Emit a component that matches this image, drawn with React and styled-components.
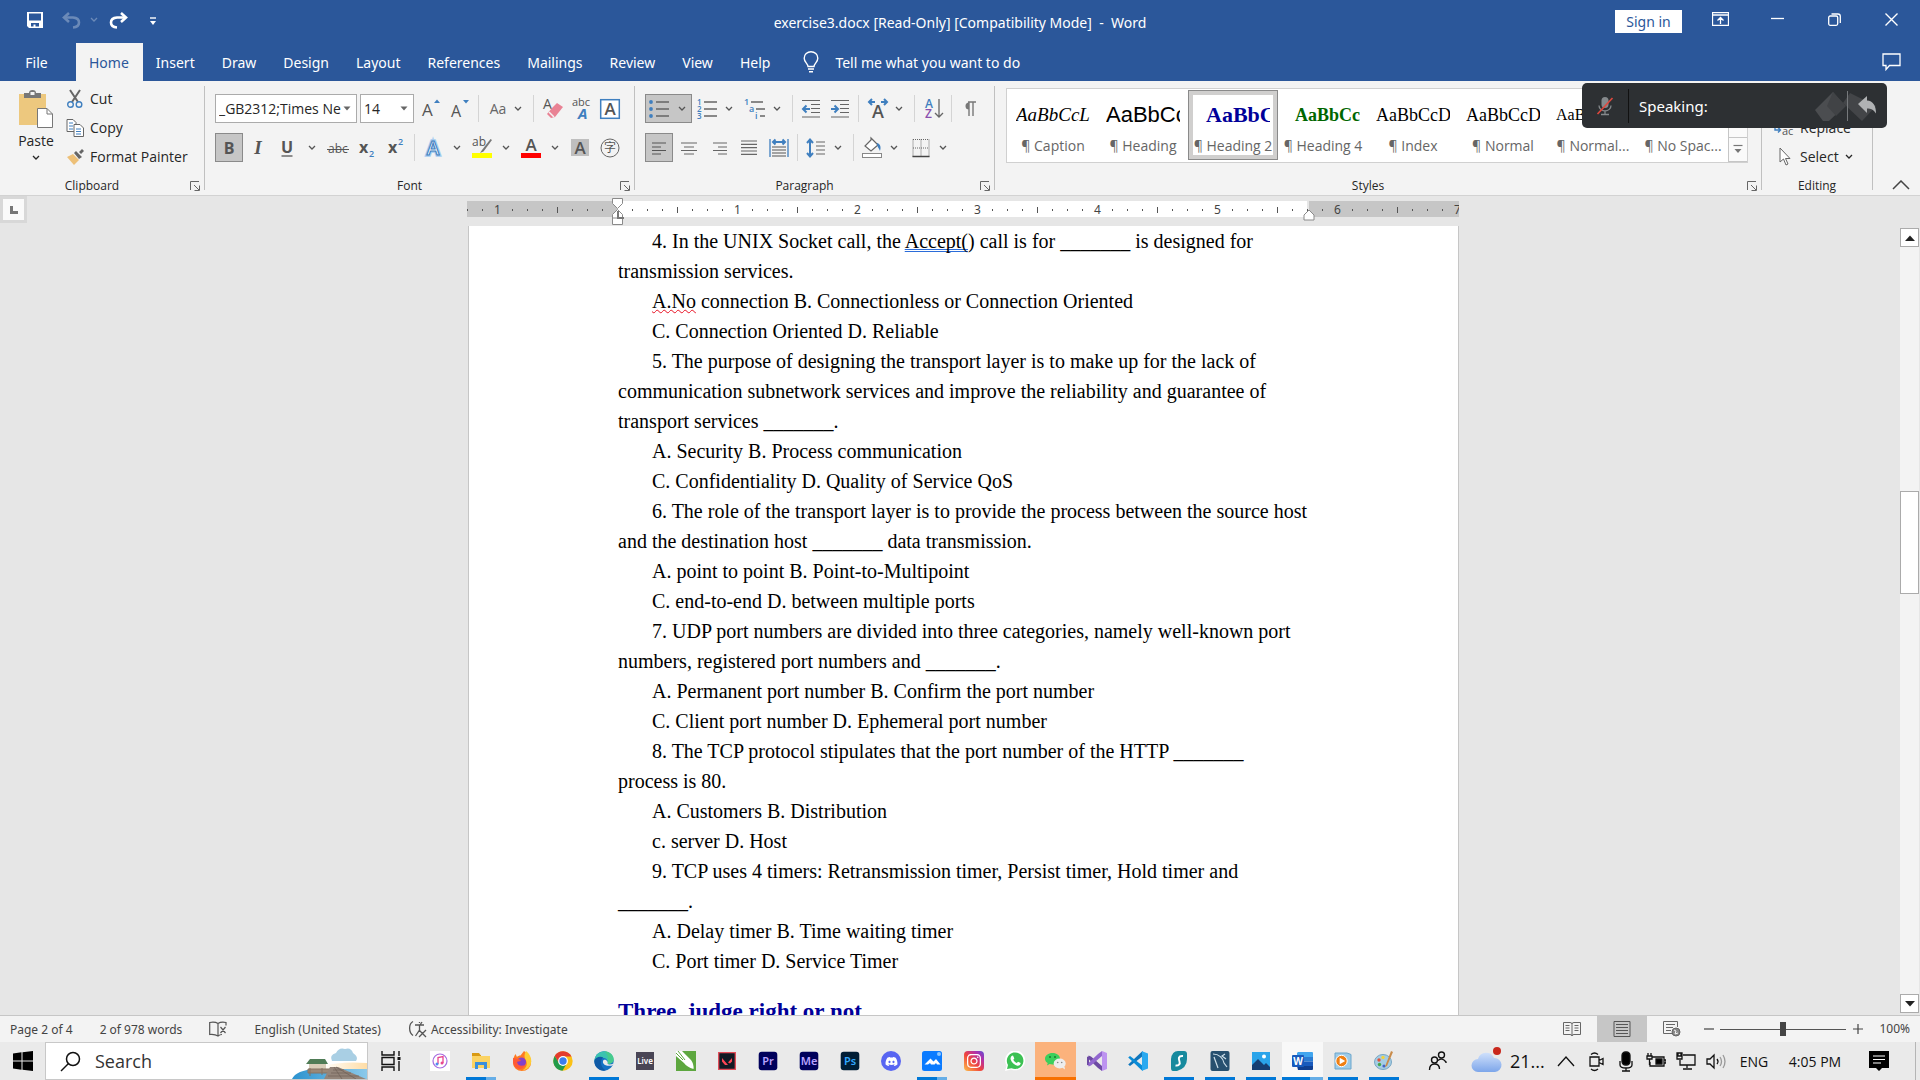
import React, { useState } from 'react';
import styled, { createGlobalStyle } from 'styled-components';
import { FaDiscord, FaInstagram } from 'react-icons/fa';

const Grammar = styled.span`
    text-decoration: underline double #2b6cd9 1px;
    text-decoration-skip-ink: none;
    text-underline-offset: 1px;
`;

const Spelling = styled.span`
    text-decoration: underline wavy #e81123 1px;
    text-decoration-skip-ink: none;
`;

const tabs = ['Home', 'Insert', 'Draw', 'Design', 'Layout', 'References', 'Mailings', 'Review', 'View', 'Help'];

const gallery = [
    { name: 'Caption', sample: 'AaBbCcL', size: 19, italic: true },
    { name: 'Heading', sample: 'AaBbCc', size: 22, sans: true },
    { name: 'Heading 2', sample: 'AaBbC', size: 22, bold: true, color: '#000099', indent: 10 },
    { name: 'Heading 4', sample: 'AaBbCc', size: 18, bold: true, color: '#006600', indent: 9 },
    { name: 'Index', sample: 'AaBbCcD', size: 18 },
    { name: 'Normal', sample: 'AaBbCcD', size: 18 },
    { name: 'Normal...', sample: 'AaBbCcD', size: 16 },
    { name: 'No Spac...', sample: 'AaBbCcD', size: 16 },
];

const blank = '_______';

const paragraphs = [
    <>4. In the UNIX Socket call, the <Grammar>Accept(</Grammar>) call is for {blank} is designed for transmission services.</>,
    <><Spelling>A.No</Spelling> connection B. Connectionless or Connection Oriented</>,
    'C. Connection Oriented D. Reliable',
    '5. The purpose of designing the transport layer is to make up for the lack of communication subnetwork services and improve the reliability and guarantee of transport services ' + blank + '.',
    'A. Security B. Process communication',
    'C. Confidentiality D. Quality of Service QoS',
    '6. The role of the transport layer is to provide the process between the source host and the destination host ' + blank + ' data transmission.',
    'A. point to point B. Point-to-Multipoint',
    'C. end-to-end D. between multiple ports',
    '7. UDP port numbers are divided into three categories, namely well-known port numbers, registered port numbers and ' + blank + '.',
    'A. Permanent port number B. Confirm the port number',
    'C. Client port number D. Ephemeral port number',
    '8. The TCP protocol stipulates that the port number of the HTTP ' + blank + ' process is 80.',
    'A. Customers B. Distribution',
    'c. server D. Host',
    '9. TCP uses 4 timers: Retransmission timer, Persist timer, Hold timer and ' + blank + '.',
    'A. Delay timer B. Time waiting timer',
    'C. Port timer D. Service Timer',
];

// one mark every eighth of an inch, zero is the left margin
const rulerMarks = Array.from({ length: 67 }, (_, i) => i - 10);

export default function App() {
    const [tab, setTab] = useState('Home');
    const [style, setStyle] = useState('Heading 2');
    const [zoom, setZoom] = useState(100);

    return (
        <Window>
            <GlobalStyle />
            <TitleBar>
                <QuickAccess>
                    <QuickButton aria-label="Save" $w={36}><SaveIcon /></QuickButton>
                    <QuickButton aria-label="Undo" $w={36} $off><UndoIcon /></QuickButton>
                    <QuickButton aria-label="Undo list" $w={10} $off><Chevron /></QuickButton>
                    <QuickButton aria-label="Redo" $w={38}><UndoIcon flip /></QuickButton>
                    <QuickButton aria-label="Customize" $w={32}>
                        <svg width="8" height="10" viewBox="0 0 8 10"><path d="M1 3h6" stroke="#fff" strokeWidth="1.4" /><path d="M1 6h6L4 10z" fill="#fff" /></svg>
                    </QuickButton>
                </QuickAccess>
                <Title>exercise3.docx [Read-Only] [Compatibility Mode]&nbsp; -&nbsp; Word</Title>
                <WindowButtons>
                    <SignIn>Sign in</SignIn>
                    <WindowButton aria-label="Ribbon display options">
                        <svg width="17" height="14" viewBox="0 0 17 14" fill="none" stroke="#fff"><path d="M.5.5h16v13H.5zM.5 3h16M8.5 12V6M5.5 8.5l3-3 3 3" strokeWidth="1.3" /></svg>
                    </WindowButton>
                    <WindowButton aria-label="Minimize">
                        <svg width="13" height="13" viewBox="0 0 13 13"><path d="M0 5.500h13" stroke="#fff" strokeWidth="1.3" /></svg>
                    </WindowButton>
                    <WindowButton aria-label="Restore">
                        <svg width="13" height="13" viewBox="0 0 13 13" fill="none" stroke="#fff" strokeWidth="1.3"><rect x=".7" y="3" width="9" height="9.3" rx="1.5" /><path d="M3.5 1H10a2.300 2.300 0 0 1 2.300 2.300V10" /></svg>
                    </WindowButton>
                    <WindowButton aria-label="Close">
                        <svg width="13" height="13" viewBox="0 0 13 13"><path d="M.5.5l12 12M12.5.5l-12 12" stroke="#fff" strokeWidth="1.4" /></svg>
                    </WindowButton>
                </WindowButtons>
            </TitleBar>

            <TabBar>
                <FileTab>File</FileTab>
                {tabs.map((name) => (
                    <Tab key={name} $active={name === tab} onClick={() => setTab(name)}>{name}</Tab>
                ))}
                <TellMe>
                    <svg width="16" height="22" viewBox="0 0 16 22" fill="none" stroke="#fff" strokeWidth="1.4"><path d="M5 15.500c0-3-3.800-4-3.800-8.300a6.800 6.500 0 0 1 13.600 0c0 4.300-3.800 5.300-3.800 8.300zM5 18h6M6 20.800h4" /></svg>
                    Tell me what you want to do
                </TellMe>
                <CommentButton aria-label="Comments">
                    <svg width="19" height="18" viewBox="0 0 19 18" fill="none" stroke="#fff" strokeWidth="1.3"><path d="M1 1h17v11.500H7.500L4 16.500v-4H1z" /></svg>
                </CommentButton>
            </TabBar>

            <Ribbon>
                <Group $w={204}>
                    <ClipboardBody>
                        <PasteButton>
                            <PasteIcon />
                            Paste
                            <PasteMore><Chevron /></PasteMore>
                        </PasteButton>
                        <Stack>
                            <TextButton><CutIcon />Cut</TextButton>
                            <TextButton><CopyIcon />Copy</TextButton>
                            <TextButton><PainterIcon />Format Painter</TextButton>
                        </Stack>
                    </ClipboardBody>
                    <GroupLabel name="Clipboard" launcher />
                </Group>
                <Divider />

                <Group $w={429}>
                    <ToolRows>
                        <ToolRow>
                            <Field $w={142}><FieldInput aria-label="Font" defaultValue="_GB2312;Times Ne" /><Arrow /></Field>
                            <Field $w={54}>
                                <FieldSelect aria-label="Font size" defaultValue="14"><option>12</option><option>14</option><option>16</option></FieldSelect>
                                <Arrow />
                            </Field>
                            <Tool aria-label="Grow font"><Glyph><text x="3" y="19" fontSize="17">A</text><path d="M15 6l3-3.500L21 6z" fill="#3f7fbf" /></Glyph></Tool>
                            <Tool aria-label="Shrink font"><Glyph><text x="3" y="20" fontSize="16">A</text><path d="M15 3l3 3.500L21 3z" fill="#3f7fbf" /></Glyph></Tool>
                            <Separator $w={7} />
                            <Tool $w={46} aria-label="Change case"><CaseText>Aa</CaseText><Chevron /></Tool>
                            <Separator $w={7} />
                            <Tool aria-label="Clear formatting"><Glyph><text x="3" y="12" fontSize="14">A</text><path d="M12 11l5-5 6 4-8 10-4 1-4-4z" fill="#e98294" /><path d="M9 15l5 5" stroke="#f3f3f3" strokeWidth="1.5" /></Glyph></Tool>
                            <Tool aria-label="Phonetic guide"><Glyph><text x="3" y="9" fontSize="11">abc</text><text x="9" y="22" fontSize="15" fontStyle="italic" fontWeight="700" fill="#3f7fbf">A</text></Glyph></Tool>
                            <Tool aria-label="Character border"><Glyph><rect x="2.7" y="2.7" width="18.600" height="18.600" fill="#fff" stroke="#3f7fbf" strokeWidth="1.5" /><text x="12" y="18" textAnchor="middle" fontSize="17" fontWeight="600">A</text></Glyph></Tool>
                        </ToolRow>
                        <ToolRow>
                            <Tool $on aria-label="Bold"><Glyph><text x="12" y="18" textAnchor="middle" fontSize="16" fontWeight="700">B</text></Glyph></Tool>
                            <Tool aria-label="Italic"><Glyph><text x="12" y="18" textAnchor="middle" fontSize="19" fontStyle="italic" fontWeight="700" fontFamily="Liberation Serif">I</text></Glyph></Tool>
                            <Tool aria-label="Underline"><Glyph><text x="12" y="17" textAnchor="middle" fontSize="16" fontWeight="700">U</text><path d="M6.500 20h11" stroke="#555" strokeWidth="1.3" /></Glyph></Tool>
                            <Drop $w={22} aria-label="Underline styles"><Chevron /></Drop>
                            <Tool aria-label="Strikethrough"><Glyph><text x="12" y="17" textAnchor="middle" fontSize="12">abc</text><path d="M1 13.500h22" stroke="#555" /></Glyph></Tool>
                            <Tool aria-label="Subscript"><Glyph><text x="4" y="17" fontSize="16" fontWeight="700">x</text><text x="14" y="21" fontSize="9" fontWeight="600" fill="#3f7fbf">2</text></Glyph></Tool>
                            <Tool aria-label="Superscript"><Glyph><text x="4" y="17" fontSize="16" fontWeight="700">x</text><text x="14" y="9" fontSize="9" fontWeight="600" fill="#3f7fbf">2</text></Glyph></Tool>
                            <Separator $w={7} />
                            <Tool aria-label="Text effects"><Glyph><text x="12" y="19" textAnchor="middle" fontSize="19" fontWeight="600" fill="#fff" stroke="#a8cdf0" strokeWidth="3.5">A</text><text x="12" y="19" textAnchor="middle" fontSize="19" fontWeight="600" fill="#fff" stroke="#3f7fbf" strokeWidth="1.1">A</text></Glyph></Tool>
                            <Drop $w={20} aria-label="Effect list"><Chevron /></Drop>
                            <Tool aria-label="Highlight"><Glyph><text x="2" y="10" fontSize="12">ab</text><path d="M20.500 3l-8.500 11-2 3 3.500-1.500L22 4z" fill="#777" /><rect x="2" y="17" width="20" height="5" fill="#ff0" /></Glyph></Tool>
                            <Drop $w={20} aria-label="Highlight colours"><Chevron /></Drop>
                            <Tool aria-label="Font colour"><Glyph><text x="12" y="15" textAnchor="middle" fontSize="17" fontWeight="600">A</text><rect x="2" y="17" width="20" height="5" fill="#f00" /></Glyph></Tool>
                            <Drop $w={20} aria-label="Font colours"><Chevron /></Drop>
                            <Tool aria-label="Character shading"><Glyph><rect x="3" y="3" width="18" height="17" fill="#bfbfbf" /><text x="12" y="18" textAnchor="middle" fontSize="17" fontWeight="600">A</text></Glyph></Tool>
                            <Tool aria-label="Enclose characters"><Glyph><circle cx="13" cy="12" r="9" fill="none" stroke="#666" /><text x="13" y="16" textAnchor="middle" fontSize="12" fontFamily="Noto Sans CJK SC">字</text></Glyph></Tool>
                        </ToolRow>
                    </ToolRows>
                    <GroupLabel name="Font" launcher />
                </Group>
                <Divider />

                <Group $w={359}>
                    <ToolRows>
                        <ToolRow>
                            <Tool $w={47} $on aria-label="Bullets"><Glyph><path d="M8 5h13M8 12h13M8 19h13" stroke="#666" strokeWidth="1.3" /><circle cx="3" cy="5" r="1.9" fill="#3f7fbf" /><circle cx="3" cy="12" r="1.9" fill="#3f7fbf" /><circle cx="3" cy="19" r="1.9" fill="#3f7fbf" /></Glyph><Chevron /></Tool>
                            <Tool $w={47} aria-label="Numbering"><Glyph><path d="M9 5h13M9 12h13M9 19h13" stroke="#666" strokeWidth="1.3" /><g fontSize="8" fontWeight="600" fill="#3f7fbf"><text x="2" y="8">1</text><text x="2" y="15">2</text><text x="2" y="22">3</text></g></Glyph><Chevron /></Tool>
                            <Tool $w={47} aria-label="Multilevel list"><Glyph><path d="M8 5h12M13 12h9M17 19h5" stroke="#666" strokeWidth="1.3" /><g fontSize="9" fontWeight="600" fill="#3f7fbf"><text x="1" y="8">1</text><text x="6" y="15">a</text><text x="12" y="22">i</text></g></Glyph><Chevron /></Tool>
                            <Separator $w={7} />
                            <Tool aria-label="Decrease indent"><IndentIcon d="M11 12H4m3.500-3.500L4 12l3.500 3.500" /></Tool>
                            <Tool aria-label="Increase indent"><IndentIcon d="M3 12h7M6.500 8.500L10 12l-3.500 3.500" /></Tool>
                            <Separator $w={7} />
                            <Tool $w={47} aria-label="Asian layout"><Glyph><text x="13" y="21" textAnchor="middle" fontSize="18" fontWeight="600">A</text><path d="M10 5H4m3-3L4 5l3 3M16 5h6m-3-3l3 3-3 3" fill="none" stroke="#3f7fbf" strokeWidth="2" /></Glyph><Chevron /></Tool>
                            <Separator $w={7} />
                            <Tool aria-label="Sort"><Glyph><text x="4" y="11" fontSize="12" fontWeight="600" fill="#3f7fbf">A</text><text x="4" y="21" fontSize="12" fontWeight="600" fill="#8a4fae">Z</text><path d="M18 2v18m-4-4l4 4 4-4" fill="none" stroke="#666" strokeWidth="1.3" /></Glyph></Tool>
                            <Separator $w={7} />
                            <Tool aria-label="Show marks"><Glyph><path d="M11 5.500a3.500 3.500 0 0 0 0 7z" fill="#777" /><path d="M11 19V5.500M15 19V5.500M10 5h8" fill="none" stroke="#777" strokeWidth="1.4" /></Glyph></Tool>
                        </ToolRow>
                        <ToolRow $gap={2}>
                            <Tool $on aria-label="Align left"><Glyph><path d="M5 7h14M5 11h9M5 14.500h14M5 18h9" stroke="#555" strokeWidth="1.2" /></Glyph></Tool>
                            <Tool aria-label="Center"><Glyph><path d="M4 7h16M7 11h10M4 14.500h16M7 18h10" stroke="#666" strokeWidth="1.2" /></Glyph></Tool>
                            <Tool aria-label="Align right"><Glyph><path d="M6 7h14M11 11h9M6 14.500h14M11 18h9" stroke="#666" strokeWidth="1.2" /></Glyph></Tool>
                            <Tool aria-label="Justify"><Glyph><path d="M4 5h16M4 8.300h16M4 11.600h16M4 15h16M4 18.300h16" stroke="#666" strokeWidth="1.2" /></Glyph></Tool>
                            <Tool aria-label="Distribute"><Glyph><path d="M3 3v18M21 3v18" stroke="#3f7fbf" strokeWidth="1.3" /><path d="M6 6h12M8.500 3.500L6 6l2.500 2.500M15.500 3.500L18 6l-2.500 2.500" fill="none" stroke="#3f7fbf" strokeWidth="2" /><path d="M5 11h14M5 14h14M5 17h14M5 20h14" stroke="#555" strokeWidth="1.2" /></Glyph></Tool>
                            <Separator $w={5} />
                            <Tool $w={47} aria-label="Line spacing"><Glyph><path d="M6 4v16M3 7l3-3.500L9 7M3 17l3 3.500L9 17" fill="none" stroke="#3f7fbf" strokeWidth="2" /><path d="M12 6h9M12 10h9M12 14h9M12 18h9" stroke="#666" strokeWidth="1.2" /></Glyph><Chevron /></Tool>
                            <Separator $w={5} />
                            <Tool $w={47} aria-label="Shading"><Glyph><path d="M11 2l7 7-7 6-6-5 6-6z" fill="#fff" stroke="#666" strokeWidth="1.2" /><path d="M17 7c4 1 4 5 3 8-1-3-3-4-3-8z" fill="#3f7fbf" /><rect x="2.5" y="17.5" width="19" height="4" fill="#fff" stroke="#888" /></Glyph><Chevron /></Tool>
                            <Tool $w={47} aria-label="Borders"><Glyph><path d="M4 3.500h16M4 12h16M4 3.500v17M12 3.500v17M20 3.500v17" stroke="#666" strokeDasharray="1 1" /><path d="M3.500 20.500h17" stroke="#444" strokeWidth="1.5" /></Glyph><Chevron /></Tool>
                        </ToolRow>
                    </ToolRows>
                    <GroupLabel name="Paragraph" launcher />
                </Group>
                <Divider />

                <Group>
                    <Gallery>
                        {gallery.map((s) => (
                            <StyleCard key={s.name} $active={s.name === style} onClick={() => setStyle(s.name)}>
                                <Sample $size={s.size} $bold={s.bold} $italic={s.italic} $sans={s.sans} $color={s.color} $indent={s.indent}>{s.sample}</Sample>
                                <StyleName>¶ {s.name}</StyleName>
                            </StyleCard>
                        ))}
                        <GalleryScroll>
                            <GalleryButton aria-label="Previous styles" />
                            <GalleryButton aria-label="Next styles"><Arrow /></GalleryButton>
                            <GalleryButton aria-label="More styles">
                                <svg width="10" height="10" viewBox="0 0 10 10"><path d="M.5 1.500h9" stroke="#777" strokeWidth="1.2" /><path d="M1.500 5h7L5 9z" fill="#777" /></svg>
                            </GalleryButton>
                        </GalleryScroll>
                    </Gallery>
                    <GroupLabel name="Styles" launcher />
                </Group>
                <Divider />

                <Group $w={110}>
                    <EditingBody>
                        <TextButton>
                            <svg width="20" height="20" viewBox="0 0 20 20"><path d="M1 7v5h5M4 9.500L6.500 12 4 14.500" fill="none" stroke="#3f7fbf" strokeWidth="1.4" /><text x="8" y="17" fontSize="11" fill="#555">ac</text></svg>
                            Replace
                        </TextButton>
                        <TextButton>
                            <svg width="20" height="20" viewBox="0 0 20 20"><path d="M6 1v14l3.500-3 2.500 6 2-1-2.500-5.500H16z" fill="#fff" stroke="#666" /></svg>
                            Select <Chevron />
                        </TextButton>
                    </EditingBody>
                    <GroupLabel name="Editing" />
                </Group>
                <Divider />
                <CollapseButton aria-label="Collapse the ribbon">
                    <svg width="18" height="10" viewBox="0 0 18 10"><path d="M1 9l8-8 8 8" fill="none" stroke="#444" strokeWidth="1.5" /></svg>
                </CollapseButton>

                <Speaking>
                    <svg width="18" height="20" viewBox="0 0 18 20"><rect x="5.5" y="1" width="7" height="11" rx="3.5" fill="#85898c" /><path d="M3 9.500a6 5.500 0 0 0 12 0M9 15v3M5 18.500h8" fill="none" stroke="#85898c" strokeWidth="1.3" /><path d="M16.500 2L1.500 18" stroke="#e0483e" strokeWidth="1.7" /></svg>
                    <SpeakingLabel>Speaking:</SpeakingLabel>
                    <svg width="64" height="34" viewBox="0 0 64 34"><path d="M1 21L19 3l12 14-16 15H9z" fill="#4b4d50" /><path d="M19 3l13 14-10 10-9-10z" fill="#414346" /><path d="M36 4l26 13-14 15L29 14z" fill="#434548" /><path d="M33.500 2v30" stroke="#76797c" /><path d="M44 15l9-8v4.500c6 .5 9 5 9 13-2.500-4-5-5-9-5V24z" fill="#b0b2b4" /></svg>
                </Speaking>
            </Ribbon>

            <RulerRow>
                <TabStop aria-label="Tab stop"><span /></TabStop>
                <Ruler>
                    <RulerScale>
                        {rulerMarks.map((n) => (
                            <Mark key={n} $kind={markKind(n)}>{markKind(n) === 'inch' ? Math.abs(n / 8) : ''}</Mark>
                        ))}
                    </RulerScale>
                    <LeftIndent width="14" height="29" viewBox="0 0 14 29"><path d="M1.500 1.500h10v5l-5 5-5-5zM6.500 12.500l5 5v10h-10v-10zM1.500 21h10" fill="#fff" stroke="#8a8a8a" /><path d="M7 14v7h6" fill="none" stroke="#777" strokeWidth="2" /></LeftIndent>
                    <RightIndent width="12" height="12" viewBox="0 0 12 12"><path d="M6 1l5 5v5H1V6z" fill="#fff" stroke="#8a8a8a" /></RightIndent>
                </Ruler>
            </RulerRow>

            <Workspace>
                <Page>
                    {paragraphs.map((text, idx) => (
                        <Paragraph key={idx}>{text}</Paragraph>
                    ))}
                    <Heading>Three, judge right or not</Heading>
                </Page>
                <ScrollBar>
                    <ScrollButton aria-label="Scroll up"><svg width="10" height="6" viewBox="0 0 10 6"><path d="M0 6l5-5.500L10 6z" fill="#222" /></svg></ScrollButton>
                    <ScrollSpace $grow={245} />
                    <ScrollThumb />
                    <ScrollSpace $grow={402} />
                    <ScrollButton aria-label="Scroll down"><svg width="10" height="6" viewBox="0 0 10 6"><path d="M0 0l5 5.500L10 0z" fill="#222" /></svg></ScrollButton>
                </ScrollBar>
            </Workspace>

            <StatusBar>
                <StatusItem>Page 2 of 4</StatusItem>
                <StatusItem>2 of 978 words</StatusItem>
                <StatusItem aria-label="Proofing">
                    <svg width="18" height="16" viewBox="0 0 18 16" fill="none" stroke="#555" strokeWidth="1.2"><path d="M9 14.500V2.500Q6 .5.7 1.500v12Q6 13 9 15q2-1.500 4-1.500M9 2.500q3-2 8-1v3M11.500 6l5 6M16.500 6l-5 6" /></svg>
                </StatusItem>
                <StatusItem>English (United States)</StatusItem>
                <StatusItem>
                    <svg width="20" height="18" viewBox="0 0 20 18" fill="none" stroke="#555" strokeWidth="1.3"><path d="M5 1.500C.5 4 .5 12 5 15.500M7 5h9M11.500 5v5l-4 6M11.500 2v1M14 2l-2 3M11 10l7 7M18 10l-7 7" /></svg>
                    Accessibility: Investigate
                </StatusItem>
                <ViewButtons>
                    <ViewButton aria-label="Read mode"><svg width="18" height="16" viewBox="0 0 18 16" fill="none" stroke="#666"><path d="M.5 1.500H7q2 0 2 1.500 0-1.500 2-1.500h6.500v12H11q-2 0-2 1.500 0-1.500-2-1.500H.5zM9 3v12M2.500 4.500h4M2.500 7h4M2.500 9.500h4M11.500 4.500h4M11.500 7h4M11.500 9.500h4" /></svg></ViewButton>
                    <ViewButton $on aria-label="Print layout"><svg width="18" height="16" viewBox="0 0 18 16" fill="none" stroke="#555"><path d="M1 .5h16v15H1zM3 3.500h12M3 6.500h12M3 9.500h12M3 12.500h12" /></svg></ViewButton>
                    <ViewButton aria-label="Web layout"><svg width="18" height="16" viewBox="0 0 18 16" fill="none" stroke="#666"><path d="M9 12.500H.5V.5h14V6M3 3.500h9M3 6.500h7M3 9.500h5" /><circle cx="13" cy="11" r="4" fill="#888" /><path d="M11 9l2 1-1 3 3-1" stroke="#f3f3f3" /></svg></ViewButton>
                </ViewButtons>
                <ZoomButton aria-label="Zoom out" onClick={() => setZoom(Math.max(10, zoom - 10))}><svg width="10" height="10" viewBox="0 0 10 10"><path d="M0 5h10" stroke="#444" strokeWidth="1.2" /></svg></ZoomButton>
                <ZoomSlider type="range" aria-label="Zoom" min="0" max="200" value={zoom} onChange={(e) => setZoom(Number(e.target.value))} />
                <ZoomButton aria-label="Zoom in" onClick={() => setZoom(Math.min(200, zoom + 10))}><svg width="10" height="10" viewBox="0 0 10 10"><path d="M0 5h10M5 0v10" stroke="#444" strokeWidth="1.2" /></svg></ZoomButton>
                <ZoomValue>{zoom}%</ZoomValue>
            </StatusBar>

            <TaskBar />
        </Window>
    );
}

function markKind(n) {
    if (n === 0) return 'none';
    if (n % 8 === 0) return 'inch';
    return n % 4 === 0 ? 'half' : 'dot';
}

function GroupLabel({ name, launcher }) {
    return (
        <LabelRow>
            <LabelText>{name}</LabelText>
            {launcher && (
                <Launcher aria-label={name + ' settings'}>
                    <svg width="10" height="10" viewBox="0 0 10 10" fill="none" stroke="#666"><path d="M.5 9V.5H9M4 4l5 5M9.500 4.500v5h-5" /></svg>
                </Launcher>
            )}
        </LabelRow>
    );
}

function Glyph({ children }) {
    return <GlyphSvg width="24" height="24" viewBox="0 0 24 24">{children}</GlyphSvg>;
}

function IndentIcon({ d }) {
    return (
        <Glyph>
            <path d="M3 3.500h18M12 7.500h9M12 11.500h9M12 15.500h9M3 20h18" stroke="#666" strokeWidth="1.2" />
            <path d={d} fill="none" stroke="#3f7fbf" strokeWidth="2" />
        </Glyph>
    );
}

function Chevron() {
    return <svg width="8" height="6" viewBox="0 0 8 6"><path d="M1 1l3 3 3-3" fill="none" stroke="currentColor" strokeWidth="1.3" /></svg>;
}

function Arrow() {
    return <svg width="8" height="5" viewBox="0 0 8 5"><path d="M.5.5h7L4 4.500z" fill="#666" /></svg>;
}

function SaveIcon() {
    return <svg width="16" height="16" viewBox="0 0 16 16"><path d="M0 0h16v16H2l-2-2z" fill="#fff" /><path d="M2 1.500h12v7H2zM4 11h8v3.500H8.500v-2h-2v2H4z" fill="#2b579a" /></svg>;
}

function UndoIcon({ flip }) {
    return (
        <svg width="19" height="17" viewBox="0 0 19 17">
            <g transform={flip ? 'translate(19 0) scale(-1 1)' : undefined} fill="none" stroke="#fff" strokeWidth="2.6">
                <path d="M7 1L2 5.500 7 10" />
                <path d="M2 5.500h9q6 .5 6 5t-6 5" />
            </g>
        </svg>
    );
}

function PasteIcon() {
    return <svg width="36" height="40" viewBox="0 0 36 40"><path d="M1 5h27v31H1z" fill="#edc87e" /><path d="M6 9V4h5q0-3 3.500-3T18 4h5v5z" fill="#777" /><rect x="12.5" y="3" width="4" height="3" fill="#f3f3f3" /><path d="M19.500 19.500H29l5.500 5.500v13.500h-15z" fill="#fff" stroke="#777" /><path d="M29 19.500V25h5.500" fill="none" stroke="#777" /></svg>;
}

function CutIcon() {
    return <svg width="18" height="20" viewBox="0 0 18 20" fill="none"><path d="M4 1l8 12M14 1L6 13" stroke="#666" strokeWidth="2" /><circle cx="4.5" cy="15.5" r="2.8" stroke="#3f7fbf" strokeWidth="1.4" /><circle cx="13" cy="15.5" r="2.8" stroke="#3f7fbf" strokeWidth="1.4" /></svg>;
}

function CopyIcon() {
    return <svg width="18" height="20" viewBox="0 0 18 20"><path d="M1 1.500h6l3 3v9H1z" fill="#fff" stroke="#666" /><path d="M3 5h4M3 8h4M3 11h4" stroke="#3f7fbf" /><path d="M8 6.500h6l3.500 3.500v8.500H8z" fill="#fff" stroke="#666" /><path d="M10 11h5M10 13.500h5M10 16h5" stroke="#3f7fbf" /></svg>;
}

function PainterIcon() {
    return <svg width="18" height="20" viewBox="0 0 18 20"><path d="M1 10l6-3 6 6-5 5z" fill="#edc078" /><path d="M8 6l2-2 6 6-3 2zM13 5l3-3 2 2-3 3z" fill="#666" /></svg>;
}

function AppTile({ bg, color, text }) {
    return (
        <svg width="20" height="20" viewBox="0 0 20 20">
            <rect x=".7" y=".7" width="18.600" height="18.600" rx="3" fill={bg} />
            <text x="10" y="14" textAnchor="middle" fontSize="11" fontWeight="600" fill={color}>{text}</text>
        </svg>
    );
}

function RoundBadge({ children }) {
    return <Badge $bg="#5865f2" $round>{children}</Badge>;
}

function InstaBadge({ children }) {
    return <Badge $bg="linear-gradient(45deg, #fdc04a, #f0443c 45%, #b32fa8 75%, #5b4fd6)">{children}</Badge>;
}

const apps = [
    { name: 'iTunes', icon: <svg width="20" height="20" viewBox="0 0 20 20"><rect width="20" height="20" fill="#fff" /><circle cx="10" cy="10" r="7" fill="none" stroke="#a66ce0" strokeWidth="1.2" /><path d="M8 13V6.500l5-1V12" fill="none" stroke="#e8468e" strokeWidth="1.3" /><circle cx="7" cy="13" r="1.5" fill="#4f8df0" /><circle cx="12" cy="12" r="1.5" fill="#e8468e" /></svg> },
    { name: 'File Explorer', run: 'many', icon: <svg width="20" height="20" viewBox="0 0 20 20"><path d="M1 2h7l1.500 2H10v4H1z" fill="#d99a13" /><path d="M1 5h18v12H1z" fill="#fbd363" /><path d="M4 18v-7h12v7h-3v-4H7v4z" fill="#3a8fdd" /></svg> },
    { name: 'Firefox', icon: <svg width="20" height="20" viewBox="0 0 20 20"><path d="M12 0c4 3 8 7 7 12a9 8 0 0 1-18 0C1 8 2 5 3.500 3l1.500 3c1-1 2-1.500 3.500-1.500z" fill="#ff7a22" /><path d="M14 0c4 3 6 8 5 12-1 5-5 7-9 7.500 4-2 6-6 4-10-2-3-2-6 0-9.500z" fill="#ffce33" /><circle cx="9.5" cy="11" r="4.5" fill="#8442c9" /><path d="M1 7c3 0 5 1 8 2-1 2-3 1-4 2 0 3 4 5 8 3-3 7-12 4-12-4z" fill="#ff5a36" /></svg> },
    { name: 'Chrome', icon: <svg width="20" height="20" viewBox="0 0 20 20"><circle cx="10" cy="10" r="9.7" fill="#fbc116" /><path d="M10 5.500h8.500A9.700 9.700 0 0 0 1.700 4.900L6 12.300z" fill="#e33b2e" /><path d="M1.700 4.900A9.700 9.700 0 0 0 9.500 19.700l4.400-7.400H6z" fill="#229a4a" /><circle cx="10" cy="10" r="4.9" fill="#fff" /><circle cx="10" cy="10" r="3.7" fill="#3b7ded" /></svg> },
    { name: 'Edge', run: 'one', icon: <svg width="20" height="20" viewBox="0 0 20 20"><circle cx="10" cy="10" r="9.7" fill="#1672c4" /><path d="M.3 10C1 4 5 .3 10.500.3c5 0 9.200 4 9.200 8 0 3-2.500 5-6.200 4.500 1-3-1-6-5-6-4 .2-7 1-8.200 3.500z" fill="#3cc3b0" /><path d="M10.500.3c5 0 9.200 4 9.200 8 0 3-2.500 5-6.200 4.500 1-3 1-9-3-12.500z" fill="#4fd177" opacity=".6" /><path d="M.3 10c1-4 6-5 9-3.500-3 2-4 9 2.500 13C5 20.500.3 16 .3 10z" fill="#0f5aa6" /><path d="M9.500 9c-2 3 1 7 9 5.500l1-2c-2 1-5 1.500-6 .3 1-1.500-1-5-4-3.800z" fill="#eaeaea" /></svg> },
    { name: 'Live', icon: <svg width="20" height="20" viewBox="0 0 20 20"><path d="M1 1h18v18H1z" fill="#494555" /><text x="10" y="13" textAnchor="middle" fontSize="8" fontWeight="600" fill="#fff">Live</text></svg> },
    { name: 'CorelDRAW', icon: <svg width="20" height="20" viewBox="0 0 20 20"><path d="M0 0h20v20H0z" fill="#5da73f" /><path d="M0 5V0h6l9 9q3 4 2.500 9Q11 16 8 12z" fill="#fff" /><path d="M2 0l7 9M0 2l7 7" stroke="#5da73f" /></svg> },
    { name: 'Valorant', icon: <svg width="20" height="20" viewBox="0 0 20 20"><path d="M1.700 1.700h16.600v16.600H1.700z" fill="#111a24" stroke="#e34b57" strokeWidth="1.3" /><path d="M5 7l6 7H8L5 10.500zM15 7v3.500l-2 2-2-1z" fill="#ff4655" /></svg> },
    { name: 'Premiere Pro', icon: <AppTile bg="#00005b" color="#b7a2ff" text="Pr" /> },
    { name: 'Media Encoder', icon: <AppTile bg="#00005b" color="#b7a2ff" text="Me" /> },
    { name: 'Photoshop', icon: <AppTile bg="#001e36" color="#31a8ff" text="Ps" /> },
    { name: 'Discord', icon: <RoundBadge><FaDiscord size={13} /></RoundBadge> },
    { name: 'Meeting', run: 'many', icon: <svg width="20" height="20" viewBox="0 0 20 20"><rect width="20" height="20" rx="2.5" fill="#0b7bff" /><path d="M2.500 13.500l6-6 3 3 2.500-2.500 4.500 5.500h-3.500l-1-1.500-1.500 1.500H9L8 12l-2 1.500z" fill="#fff" /><circle cx="17" cy="3" r="2" fill="#8cc6ff" /></svg> },
    { name: 'Instagram', icon: <InstaBadge><FaInstagram size={16} /></InstaBadge> },
    { name: 'WhatsApp', icon: <svg width="20" height="20" viewBox="0 0 20 20"><path d="M0 20l1.500-5.500A10 10 0 1 1 6 18.500z" fill="#fff" /><path d="M2 18l1-4a8.300 8.300 0 1 1 3.500 3.200z" fill="#3cc153" /><path d="M6.500 5l1.500-.5 1.300 3-1 1.200c1 1.800 2 2.700 3.500 3.300l1.200-1.300 2.700 1.400c0 2-2 3-4 2.400C8.500 13.500 5.500 10 5.500 7z" fill="#fff" /></svg> },
    { name: 'WeChat', hot: true, icon: <svg width="21" height="20" viewBox="0 0 21 20"><path d="M7.500 2c4.300 0 7.500 2.500 7.500 5.700s-3.200 5.800-7.500 5.800c-1 0-2 0-2.800-.4L2 14.500l.7-2.500C1 11 0 9.500 0 7.700 0 4.500 3.200 2 7.500 2z" fill="#3ccf5c" /><circle cx="5" cy="6" r="1" fill="#187a30" /><circle cx="10" cy="6" r="1" fill="#187a30" /><ellipse cx="14.7" cy="12.5" rx="6" ry="5" fill="#ededed" /><path d="M17 16.500l3 2-.5-3z" fill="#ededed" /><circle cx="12.7" cy="11.5" r=".8" fill="#888" /><circle cx="16.7" cy="11.5" r=".8" fill="#888" /></svg> },
    { name: 'Visual Studio', icon: <svg width="20" height="20" viewBox="0 0 20 20"><path d="M1.500 4.500L4 5.500l11 9.500v5l-4-3L1.500 8zM0 6l2-1v9.500L0 14z" fill="#6d4aa3" /><path d="M1.500 15.500L4 14.500 15 5V0l-4 3-9.500 9z" fill="#9267cf" /><path d="M15 0l5 2v16l-5 2z" fill="#bd93f0" /></svg> },
    { name: 'VS Code', icon: <svg width="20" height="20" viewBox="0 0 20 20"><path d="M15 5L2 15l-1.800-1.500L14 .5h1z" fill="#0f76bd" /><path d="M15 15L2 5 .2 6.500 14 19.500h1z" fill="#0a8bd6" /><path d="M14 .2l6 2.300v15l-6 2.300z" fill="#2aa9f0" /></svg> },
    { name: 'Surfshark', run: 'one', icon: <svg width="20" height="20" viewBox="0 0 20 20"><path d="M9 0h6q3 0 3 3v5q0 9-10 12H4q-2 0-2-3V8q1-8 7-8z" fill="#178a9e" /><path d="M14 5c-5-.5-4.500 3-3.500 5.500S9.500 15 6.500 14.500" fill="none" stroke="#fff" strokeWidth="2" /></svg> },
    { name: 'MySQL Workbench', run: 'one', icon: <svg width="20" height="20" viewBox="0 0 20 20"><rect x=".5" width="19" height="20" rx="2" fill="#27506f" /><path d="M3 3c6 0 10 4 11 9l3 4M4 6l4 11M15 3l-3 2 4 3" fill="none" stroke="#cfe0ea" strokeWidth="1.2" /></svg> },
    { name: 'Photos', run: 'one', icon: <svg width="20" height="20" viewBox="0 0 20 20"><rect x="1" y="1" width="18" height="18" fill="#2aa4ea" /><path d="M1 14l6-6 6 6 2-2 4 4v3H1z" fill="#163f73" /><circle cx="13" cy="5.5" r="2" fill="#fff" /></svg> },
    { name: 'Word', run: 'many', focus: true, icon: <svg width="21" height="20" viewBox="0 0 21 20"><path d="M6 1h14q1 0 1 1v4H5V2z" fill="#41a5ee" /><path d="M5 6h16v4.500H5z" fill="#2b7cd3" /><path d="M5 10.500h16V15H5z" fill="#185abd" /><path d="M5 15h16v3q0 1-1 1H6z" fill="#103f91" /><rect y="4" width="12" height="12" rx="1" fill="#185abd" /><text x="6" y="14" textAnchor="middle" fontSize="10" fontWeight="700" fill="#fff">W</text></svg> },
    { name: 'Media Player', run: 'one', icon: <svg width="20" height="20" viewBox="0 0 20 20"><path d="M2 2h12l4 1.500V18H2z" fill="#9dcbe8" stroke="#6da6cc" /><circle cx="8.5" cy="10" r="5.7" fill="#f07f13" stroke="#fff" /><path d="M6.700 6.700l5.500 3.300-5.500 3.300z" fill="#fff" /></svg> },
    { name: 'Paint', run: 'one', icon: <svg width="20" height="20" viewBox="0 0 20 20"><ellipse cx="9" cy="11" rx="8.5" ry="7.5" fill="#a5cde4" stroke="#78a7c4" /><circle cx="5" cy="9" r="1.7" fill="#e0533d" /><circle cx="9" cy="6.5" r="1.7" fill="#f3d33e" /><circle cx="5.5" cy="13.5" r="1.7" fill="#44a84d" /><circle cx="10" cy="15" r="1.6" fill="#4065c8" /><path d="M17 0l2 1-6 14-2 1 1-3z" fill="#c98b4a" /></svg> },
];

const tray = [
    { name: 'Hidden icons', icon: <path d="M2 15l8-9 8 9" /> },
    { name: 'Meet now', icon: <path d="M4 6h9v9H4zM13 9.500l4-2v6l-4-2M5 3.500q3.500-3 7 0M5 18q3.500 3 7 0" /> },
    { name: 'Microphone', icon: <><rect x="6" y="1" width="8" height="13" rx="3.5" fill="#000" /><path d="M4 10v4q0 3 6 3t6-3v-4M10 17v3M6 20h8" /></> },
    { name: 'Battery', icon: <><path d="M6 6h12v9H4v-4M18 9h2v3h-2M2 2v3M5 2v3M1 5h5v3H1zM3.500 8v6" /><path d="M10 8h6v5h-6z" fill="#000" /></> },
    { name: 'Network', icon: <path d="M7 4h12v10H4V9M11 14v3M7 18h9M1 2h5v6H1zM2 2v3h3V2" /> },
    { name: 'Volume', icon: <><path d="M1 8h3l4-4v13l-4-4H1zM11 8q2 2.500 0 5" /><path d="M14 6q3 4.500 0 9M17 4q4 6.500 0 13" stroke="#999" /></> },
];

function TaskBar() {
    return (
        <Bar>
            <BarButton $w={45} aria-label="Start">
                <svg width="20" height="20" viewBox="0 0 20 20"><path d="M0 2.500L8.500 1.300V9.500H0zM9.500 1.200L20 0v9.500H9.500zM0 10.500h8.500v8.200L0 17.500zM9.500 10.500H20V20L9.500 18.800z" /></svg>
            </BarButton>
            <SearchBox>
                <svg width="21" height="21" viewBox="0 0 21 21" fill="none" stroke="#111" strokeWidth="1.5"><circle cx="13" cy="8" r="6.5" /><path d="M8.500 12.500L1 20" /></svg>
                <SearchInput aria-label="Search" placeholder="Search" />
                <svg width="75" height="36" viewBox="0 0 75 36">
                    <defs>
                        <linearGradient id="sky" x1="0" x2="1"><stop offset="0" stopColor="#fff" /><stop offset="1" stopColor="#ffdda6" /></linearGradient>
                        <linearGradient id="sea" x1="0" x2="1"><stop offset="0" stopColor="#2c93cf" /><stop offset="1" stopColor="#8bc9ea" /></linearGradient>
                    </defs>
                    <path d="M30 23Q50 18 75 20v6H30z" fill="url(#sky)" />
                    <path d="M0 36Q4 27 24 26h51v10z" fill="url(#sea)" />
                    <path d="M40 18q-3-6 4-8 3-6 9-4 6-2 8 4 6 4 3 8z" fill="#a9cfe4" />
                    <path d="M14 21l4-5h15l3 5z" fill="#4f7c56" />
                    <path d="M17 21h17v6H17z" fill="#d8cdb8" />
                    <path d="M16 26h30l-6 4H16zM18 25v8M30 25v7" fill="#9a8877" stroke="#857262" />
                    <path d="M38 24h8l28 12H32z" fill="#94857a" />
                    <path d="M42 24l8 12M44 24l20 12M41 27h11M39 30h20M36 33h31" stroke="#6f6058" strokeWidth=".7" fill="none" />
                </svg>
            </SearchBox>
            <BarButton $w={46} aria-label="Task view">
                <svg width="20" height="20" viewBox="0 0 20 20" fill="none" stroke="#111" strokeWidth="1.4"><path d="M1 0v4h12V0M1 20v-4h12v4M1 6.500h12v7H1zM18 0v5M18 10v10" /><path d="M16.500 7.500h3" strokeWidth="3" /></svg>
            </BarButton>
            <Apps>
                {apps.map((app) => (
                    <AppButton key={app.name} aria-label={app.name} $run={app.run} $hot={app.hot} $focus={app.focus}>{app.icon}</AppButton>
                ))}
            </Apps>
            <Tray>
                <BarButton $w={44} aria-label="People">
                    <svg width="20" height="20" viewBox="0 0 20 20" fill="none" stroke="#111" strokeWidth="1.4"><circle cx="6.5" cy="9" r="3" /><path d="M1.500 19q0-6 5-6t5 5" /><circle cx="13.5" cy="4" r="3" /><path d="M10 9.500q4-3.500 8 1.500v1" /></svg>
                </BarButton>
                <Weather>
                    <svg width="32" height="30" viewBox="0 0 32 30"><defs><linearGradient id="cloud" x2="0" y2="1"><stop offset="0" stopColor="#cfe0fb" /><stop offset="1" stopColor="#7da6ea" /></linearGradient></defs><path d="M8 26a6.500 6.500 0 0 1 0-13 8.500 8.500 0 0 1 16-1 7 7 0 0 1 1 14z" fill="url(#cloud)" /><circle cx="27" cy="5" r="4" fill="#c9281c" /></svg>
                    21...
                </Weather>
                {tray.map((item) => (
                    <BarButton key={item.name} $w={30} aria-label={item.name}>
                        <svg width="20" height="21" viewBox="0 0 20 21" fill="none" stroke="#111" strokeWidth="1.3">{item.icon}</svg>
                    </BarButton>
                ))}
                <TrayText $w={46}>ENG</TrayText>
                <TrayText $w={76}>4:05 PM</TrayText>
                <BarButton $w={52} aria-label="Notifications">
                    <svg width="20" height="20" viewBox="0 0 20 20"><path d="M0 0h20v17h-7l-3 3-3-3H0z" /><path d="M4 5h12M4 8.500h12M4 12h8" stroke="#fff" strokeWidth="1.2" /></svg>
                </BarButton>
                <DesktopEdge />
            </Tray>
        </Bar>
    );
}

const GlobalStyle = createGlobalStyle`
    body {
        margin: 0;
    }
    * {
        box-sizing: border-box;
    }
    body {
        font-family: "Noto Sans", "Open Sans", sans-serif;
        font-size: 14px;
    }
    button, input, select {
        font: inherit;
    }
    button {
        padding: 0;
        border: 0;
        background: none;
        color: inherit;
        white-space: nowrap;
    }
    svg {
        flex: none;
        display: block;
    }
`;

const Window = styled.div`
    display: flex;
    flex-direction: column;
    height: 100vh;
    overflow: hidden;
    background: #e6e6e6;
    color: #262626;
`;

const TitleBar = styled.header`
    display: grid;
    grid-template-columns: 1fr auto 1fr;
    height: 43px;
    flex: none;
    background: #2b579a;
    color: #fff;
`;

const QuickAccess = styled.div`
    display: flex;
    align-items: center;
    height: 40px;
    padding-left: 17px;
`;

const QuickButton = styled.button`
    display: flex;
    justify-content: center;
    width: ${(p) => p.$w}px;
    opacity: ${(p) => (p.$off ? 0.3 : 1)};
`;

const Title = styled.div`
    line-height: 45px;
    white-space: pre;
`;

const WindowButtons = styled.div`
    display: flex;
    justify-content: flex-end;
`;

const SignIn = styled.button`
    width: 67px;
    height: 23px;
    margin: 10px 10px 0 0;
    background: #fff;
    color: #2b579a;
`;

const WindowButton = styled.button`
    display: flex;
    justify-content: center;
    align-items: center;
    width: 57px;
    height: 38px;
`;

const TabBar = styled.nav`
    display: flex;
    height: 38px;
    flex: none;
    background: #2b579a;
    color: #fff;
`;

const FileTab = styled.button`
    width: 76px;
    padding-right: 3px;
`;

const Tab = styled.button`
    padding: 0 14px 0 13px;
    background: ${(p) => (p.$active ? '#f3f3f3' : 'none')};
    color: ${(p) => (p.$active ? '#2b579a' : '#fff')};
`;

const TellMe = styled.button`
    display: flex;
    align-items: center;
    gap: 16px;
    margin-left: 19px;
`;

const CommentButton = styled.button`
    display: flex;
    justify-content: center;
    align-items: center;
    width: 57px;
    margin-left: auto;
`;

const Ribbon = styled.section`
    position: relative;
    display: flex;
    height: 115px;
    flex: none;
    background: #f3f3f3;
    border-bottom: 1px solid #d2d2d2;
    font-family: "Open Sans", "Noto Sans", sans-serif;
`;

const Group = styled.div`
    display: flex;
    flex-direction: column;
    justify-content: space-between;
    flex: ${(p) => (p.$w ? `0 0 ${p.$w}px` : '1 1 0')};
    min-width: 0;
`;

const Divider = styled.div`
    width: 1px;
    flex: none;
    margin: 5px 0;
    background: #c0c0c0;
`;

const LabelRow = styled.div`
    display: flex;
    align-items: center;
    height: 18px;
`;

const LabelText = styled.div`
    flex: 1;
    text-align: center;
    font-size: 12px;
    line-height: 18px;
`;

const Launcher = styled.button`
    width: 20px;
    padding-left: 6px;
`;

const ClipboardBody = styled.div`
    display: flex;
    gap: 10px;
    padding: 3px 0 0 16px;
`;

const PasteButton = styled.button`
    display: flex;
    flex-direction: column;
    align-items: center;
    width: 40px;
    padding-top: 5px;
    gap: 2px;
`;

const PasteMore = styled.span`
    padding-top: 3px;
`;

const Stack = styled.div`
    display: flex;
    flex-direction: column;
`;

const TextButton = styled.button`
    display: flex;
    align-items: center;
    gap: 6px;
    height: 29px;
`;

const ToolRows = styled.div`
    display: flex;
    flex-direction: column;
    gap: 10px;
    padding: 13px 0 0 10px;
`;

const ToolRow = styled.div`
    display: flex;
    align-items: center;
    gap: ${(p) => p.$gap || 1}px;
    height: 29px;
`;

const Field = styled.div`
    display: flex;
    align-items: center;
    gap: 2px;
    width: ${(p) => p.$w}px;
    height: 29px;
    padding: 0 5px 0 3px;
    margin-right: 2px;
    border: 1px solid #ababab;
    background: #fff;
`;

const FieldInput = styled.input`
    flex: 1;
    min-width: 0;
    padding: 0;
    border: 0;
    outline: 0;
    color: #262626;
`;

const FieldSelect = styled.select`
    flex: 1;
    min-width: 0;
    padding: 0;
    border: 0;
    outline: 0;
    appearance: none;
    background: none;
    color: #262626;
`;

const Tool = styled.button`
    display: flex;
    justify-content: ${(p) => (p.$w === 47 ? 'flex-start' : 'center')};
    align-items: center;
    gap: ${(p) => (p.$w === 47 ? 6 : 8)}px;
    width: ${(p) => p.$w || 28}px;
    height: 29px;
    padding-left: ${(p) => (p.$w === 47 ? 2 : 0)}px;
    border: ${(p) => (p.$on ? '1px solid #8a8a8a' : '0')};
    background: ${(p) => (p.$on ? '#c6c6c6' : 'none')};
    color: #555;
`;

const Drop = styled.button`
    display: flex;
    justify-content: center;
    width: ${(p) => p.$w}px;
    margin-left: -1px;
    color: #555;
`;

const GlyphSvg = styled.svg`
    fill: #555;
    overflow: visible;
`;

const CaseText = styled.span`
    font-size: 14px;
    color: #666;
`;

const Separator = styled.div`
    width: ${(p) => p.$w}px;
    height: 27px;
    background: linear-gradient(#d4d4d4, #d4d4d4) center / 1px 100% no-repeat;
`;

const Gallery = styled.div`
    display: flex;
    height: 75px;
    margin: 7px 13px 0 11px;
    padding-left: 1px;
    border: 1px solid #d0d0d0;
    background: #fff;
    overflow: hidden;
`;

const StyleCard = styled.button`
    display: flex;
    flex-direction: column;
    justify-content: space-between;
    flex: 1 1 90px;
    min-width: 0;
    height: 70px;
    margin-top: 1px;
    padding: 11px 4px 0;
    outline: ${(p) => (p.$active ? '1px solid #8a8a8a' : '0')};
    outline-offset: -1px;
    box-shadow: ${(p) => (p.$active ? 'inset 0 0 0 5px #d0cfce' : 'none')};
    overflow: hidden;
`;

const Sample = styled.span`
    width: 100%;
    padding-left: ${(p) => p.$indent || 0}px;
    border: solid transparent;
    border-width: 0 4px;
    overflow: hidden;
    text-align: left;
    font-family: ${(p) => (p.$sans ? '"Liberation Sans", sans-serif' : '"Liberation Serif", serif')};
    font-size: ${(p) => p.$size}px;
    font-weight: ${(p) => (p.$bold ? 700 : 400)};
    font-style: ${(p) => (p.$italic ? 'italic' : 'normal')};
    line-height: 28px;
    color: ${(p) => p.$color || '#000'};
`;

const StyleName = styled.span`
    width: 100%;
    text-align: center;
    line-height: 29px;
    color: #666;
`;

const GalleryScroll = styled.div`
    display: flex;
    flex-direction: column;
    width: 19px;
    flex: none;
    border-left: 1px solid #c6c6c6;
`;

const GalleryButton = styled.button`
    display: flex;
    justify-content: center;
    align-items: center;
    flex: 1;
    border-bottom: 1px solid #c6c6c6;
    background: #fafafa;
`;

const EditingBody = styled.div`
    display: flex;
    flex-direction: column;
    padding: 32px 0 0 12px;
`;

const CollapseButton = styled.button`
    display: flex;
    justify-content: center;
    align-items: flex-end;
    width: 47px;
    padding-bottom: 5px;
    padding-left: 8px;
`;

const Speaking = styled.div`
    position: absolute;
    top: 2px;
    right: 33px;
    display: flex;
    align-items: center;
    gap: 14px;
    width: 305px;
    height: 45px;
    padding: 0 9px 0 14px;
    border-radius: 5px;
    background: #2d3033;
    color: #fff;
`;

const SpeakingLabel = styled.span`
    flex: 1;
    padding-left: 10px;
    border-left: 1px solid #111;
    font-family: "Noto Sans", "Open Sans", sans-serif;
    font-size: 15px;
    line-height: 34px;
`;

const RulerRow = styled.div`
    display: flex;
    align-items: flex-start;
    height: 30px;
    flex: none;
    padding-right: 21px;
`;

const TabStop = styled.button`
    display: flex;
    justify-content: center;
    align-items: center;
    width: 27px;
    height: 27px;
    flex: none;
    border: 3px solid #d8d8d8;
    background: #fafafa;

    span {
        width: 8px;
        height: 8px;
        border: solid #777;
        border-width: 0 0 3px 3px;
    }
`;

const Ruler = styled.div`
    position: relative;
    width: 992px;
    margin: 5px auto 0;
`;

const RulerScale = styled.div`
    display: flex;
    height: 16px;
    padding-top: 1px;
    overflow: hidden;
    background: linear-gradient(90deg, #c6c6c6 150px, #fff 150px, #fff 840px, #e6e6e6 840px, #e6e6e6 842px, #c6c6c6 842px);
`;

const Mark = styled.span`
    display: flex;
    justify-content: center;
    align-items: center;
    width: 15px;
    flex: none;
    font-size: 12px;
    line-height: 15px;
    color: #444;

    &:first-child {
        width: 8px;
        justify-content: flex-start;
    }
    &::after {
        content: "";
        width: 1px;
        height: ${(p) => (p.$kind === 'half' ? 6 : 2)}px;
        display: ${(p) => (p.$kind === 'half' || p.$kind === 'dot' ? 'block' : 'none')};
        background: #555;
    }
`;

const LeftIndent = styled.svg`
    position: absolute;
    top: -4px;
    left: 144px;
`;

const RightIndent = styled.svg`
    position: absolute;
    top: 8px;
    left: 836px;
`;

const Workspace = styled.main`
    display: flex;
    flex: 1;
    min-height: 0;
    padding-left: 27px;
`;

const Page = styled.article`
    width: 991px;
    margin: 0 auto;
    padding: 0 150px 0 149px;
    border: solid #c6c6c6;
    border-width: 0 1px;
    background: #fff;
    color: #000;
    font-family: "Liberation Serif", serif;
    font-size: 20px;
    line-height: 30px;
    overflow: hidden;
`;

const Paragraph = styled.p`
    margin: 0;
    text-indent: 34px;
`;

const Heading = styled.h2`
    margin: 21px 0 0;
    font-size: 23px;
    font-weight: 700;
    line-height: 30px;
    color: #000099;
`;

const ScrollBar = styled.div`
    display: flex;
    flex-direction: column;
    width: 20px;
    flex: none;
    padding: 2px 1px 2px 0;
`;

const ScrollButton = styled.button`
    display: flex;
    justify-content: center;
    align-items: center;
    height: 19px;
    flex: none;
    border: 1px solid #ababab;
    background: #fff;
`;

const ScrollSpace = styled.div`
    flex: ${(p) => p.$grow} 1 0;
    background: #f3f3f3;
`;

const ScrollThumb = styled.div`
    height: 103px;
    border: 1px solid #ababab;
    background: #fff;
`;

const StatusBar = styled.footer`
    display: flex;
    align-items: stretch;
    height: 27px;
    flex: none;
    padding: 0 10px 0 0;
    border-top: 1px solid #c6c6c6;
    background: #f3f3f3;
    color: #444;
    font-size: 12px;
`;

const StatusItem = styled.button`
    display: flex;
    align-items: center;
    gap: 3px;
    padding: 0 17px 0 10px;
`;

const ViewButtons = styled.div`
    display: flex;
    margin-left: auto;
`;

const ViewButton = styled.button`
    display: flex;
    justify-content: center;
    align-items: center;
    width: 50px;
    background: ${(p) => (p.$on ? '#c6c6c6' : 'none')};
`;

const ZoomButton = styled.button`
    display: flex;
    justify-content: center;
    align-items: center;
    width: 23px;
`;

const ZoomSlider = styled.input`
    width: 126px;
    margin: 0;
    appearance: none;
    background: linear-gradient(#555, #555) center / 100% 1px no-repeat;

    &::-webkit-slider-thumb {
        appearance: none;
        width: 6px;
        height: 14px;
        background: #444;
    }
`;

const ZoomValue = styled.span`
    width: 41px;
    text-align: right;
    line-height: 26px;
`;

const Bar = styled.footer`
    display: flex;
    height: 38px;
    flex: none;
    background: #eaeaea;
    color: #111;
`;

const BarButton = styled.button`
    display: flex;
    justify-content: center;
    align-items: center;
    width: ${(p) => p.$w}px;
    flex: none;
`;

const SearchBox = styled.label`
    display: flex;
    align-items: center;
    width: 323px;
    flex: none;
    padding-left: 14px;
    border: 1px solid #c8c8c8;
    background: #fff;
    font-family: "Open Sans", "Noto Sans", sans-serif;
`;

const SearchInput = styled.input`
    flex: 1;
    min-width: 0;
    padding: 0 0 0 14px;
    border: 0;
    outline: 0;
    font-size: 18px;

    &::placeholder {
        color: #333;
        opacity: 1;
    }
`;

const Apps = styled.div`
    display: flex;
    flex: 0 1 986px;
    margin-left: 5px;
`;

const runColors = {
    one: '#0078d7, #0078d7',
    many: '#0078d7 68%, #66aee7 68%',
};

const AppButton = styled.button`
    display: flex;
    justify-content: center;
    align-items: center;
    flex: 1;
    background-color: ${(p) => (p.$hot ? '#fbb27c' : p.$focus ? '#f8f8f8' : 'transparent')};
    background-image: ${(p) => (p.$hot ? 'linear-gradient(#f77000, #f77000)' : p.$run ? `linear-gradient(90deg, ${runColors[p.$run]})` : 'none')};
    background-position: bottom;
    background-size: ${(p) => (p.$hot || p.$focus ? '100%' : '30px')} 3px;
    background-repeat: no-repeat;
`;

const Badge = styled.span`
    display: flex;
    justify-content: center;
    align-items: center;
    width: 20px;
    height: 20px;
    border-radius: ${(p) => (p.$round ? 10 : 4)}px;
    background: ${(p) => p.$bg};
    color: #fff;
`;

const Tray = styled.div`
    display: flex;
    margin-left: auto;
    font-family: "Open Sans", "Noto Sans", sans-serif;
`;

const Weather = styled.button`
    display: flex;
    align-items: center;
    gap: 8px;
    width: 91px;
    padding-left: 10px;
    font-size: 18px;
`;

const TrayText = styled.button`
    width: ${(p) => p.$w}px;
    font-size: 14px;
`;

const DesktopEdge = styled.div`
    width: 5px;
    margin-left: 10px;
    border-left: 1px solid #b5b5b5;
`;
